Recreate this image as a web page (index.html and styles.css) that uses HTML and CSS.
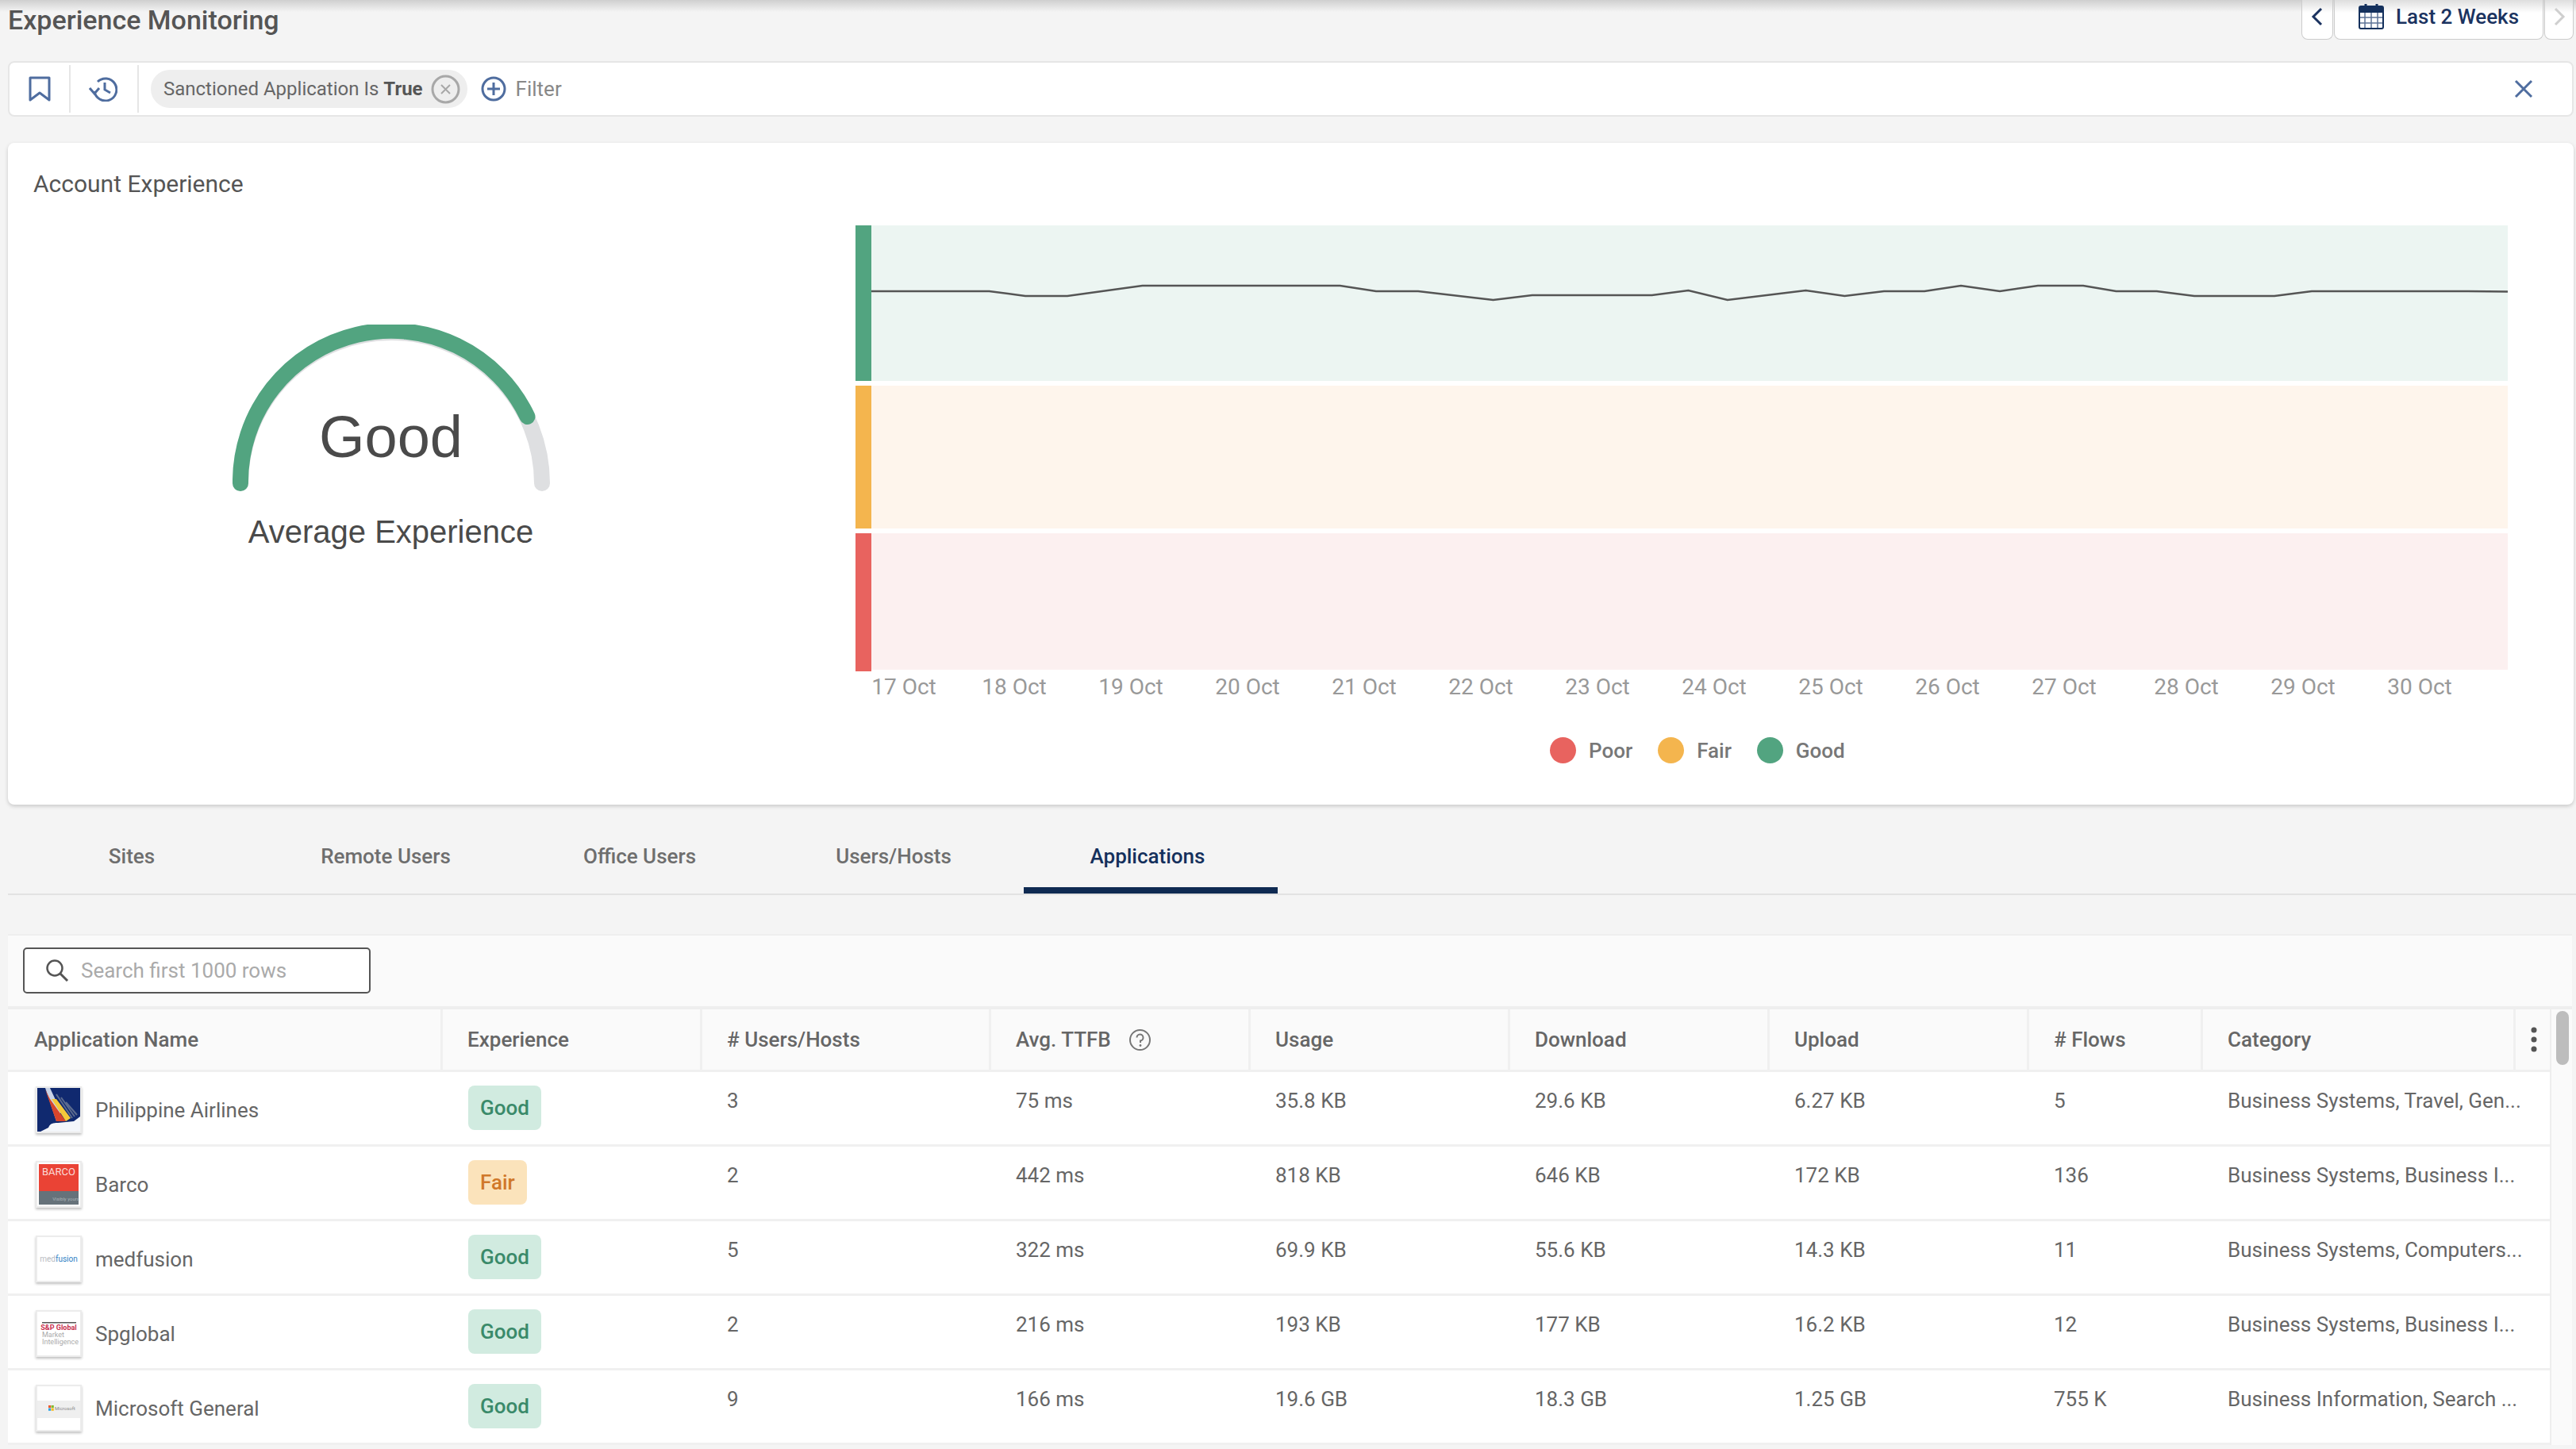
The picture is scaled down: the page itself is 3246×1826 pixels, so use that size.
FILE: index.html
```html
<!DOCTYPE html>
<html>
	<head>
		<title>Experience Monitoring</title>
		<link rel="stylesheet" href="styles.css">
	</head>

	<body>
		<div class="pageHead">
			<div class="pageTitle">Experience Monitoring</div>
			<div class="dateGroup">
				<div class="dateBtn dateArrow">
					<svg width="16" height="26" viewBox="0 0 16 26"><path d="M13 3 L3 13 L13 23" fill="none" stroke="#1b3360" stroke-width="3"/></svg>
				</div>
				<div class="dateBtn dateMain">
					<svg width="32" height="33" viewBox="0 0 32 33">
						<rect x="1" y="4" width="30" height="28" rx="2" fill="#fff" stroke="#14305c" stroke-width="2"/>
						<rect x="1" y="4" width="30" height="8" fill="#14305c"/>
						<path d="M9 1 V8 M23 1 V8" stroke="#14305c" stroke-width="3"/>
						<path d="M8 12 V31 M16 12 V31 M24 12 V31 M2 18 H30 M2 25 H30" stroke="#5d7396" stroke-width="1.5"/>
					</svg>
					<span>Last 2 Weeks</span>
				</div>
				<div class="dateBtn dateArrow dateNext">
					<svg width="16" height="26" viewBox="0 0 16 26"><path d="M3 3 L13 13 L3 23" fill="none" stroke="#cfcfcf" stroke-width="3"/></svg>
				</div>
			</div>
		</div>

		<div class="filterBar">
			<div class="filterTool">
				<svg width="28" height="32" viewBox="0 0 28 32"><path d="M2 2 H26 V30 L14 21 L2 30 Z" fill="none" stroke="#4f6d9f" stroke-width="3" stroke-linejoin="round"/></svg>
			</div>
			<div class="filterTool">
				<svg width="36" height="32" viewBox="0 0 36 32">
					<path d="M7 19 A14 14 0 1 0 11 7" fill="none" stroke="#4f6d9f" stroke-width="3"/>
					<path d="M1 15 L7 22 L13 15" fill="none" stroke="#4f6d9f" stroke-width="3"/>
					<path d="M20 8 V17 L27 21" fill="none" stroke="#4f6d9f" stroke-width="3"/>
				</svg>
			</div>
			<div class="chip">
				<span>Sanctioned Application Is <b>True</b></span>
				<svg width="37" height="37" viewBox="0 0 37 37">
					<circle cx="18.5" cy="18.5" r="16.5" fill="none" stroke="#a8a8a8" stroke-width="3"/>
					<path d="M13 13 L24 24 M24 13 L13 24" stroke="#a8a8a8" stroke-width="2"/>
				</svg>
			</div>
			<svg class="addIcon" width="32" height="32" viewBox="0 0 32 32">
				<circle cx="16" cy="16" r="14" fill="none" stroke="#4f6d9f" stroke-width="3"/>
				<path d="M16 8 V24 M8 16 H24" stroke="#4f6d9f" stroke-width="3"/>
			</svg>
			<span class="filterLabel">Filter</span>
			<svg class="clearIcon" width="24" height="24" viewBox="0 0 24 24"><path d="M2 2 L22 22 M22 2 L2 22" stroke="#4f6d9f" stroke-width="3"/></svg>
		</div>

		<div class="card">
			<div class="cardTitle">Account Experience</div>
			<div class="cardBody">
				<div class="gaugeCol">
					<div class="gauge">
						<svg width="400" height="210" viewBox="0 0 400 210">
							<path d="M10 200 A190 190 0 0 1 390 200" fill="none" stroke="#dedfe1" stroke-width="20" stroke-linecap="round"/>
							<path d="M10 200 A190 190 0 0 1 371.5 116" fill="none" stroke="#52a480" stroke-width="20" stroke-linecap="round"/>
						</svg>
						<div class="gaugeValue">Good</div>
					</div>
					<div class="gaugeLabel">Average Experience</div>
				</div>
				<div class="chartCol">
					<div class="bands">
						<div class="band bandGood"><div class="bandBar"></div><div class="bandFill"></div></div>
						<div class="band bandFair"><div class="bandBar"></div><div class="bandFill"></div></div>
						<div class="band bandPoor"><div class="bandBar"></div><div class="bandFill"></div></div>
						<svg class="bandLine" width="2082" height="562" viewBox="0 0 2082 562">
							<polyline fill="none" stroke="#555" stroke-width="2.5" points="20,83 168.5,83 214,89 267,89 361.5,76 610.6,76 656,83 709,83 803.6,94 852.7,88 1003.6,88 1049.5,82 1098.8,94 1197.4,82 1246.4,89 1296,83 1347,83 1393,76 1442,83 1490,76 1547,76 1588.5,83 1639.7,83 1687,89 1788,89 1835,83 2032,83 2082,83.5"/>
						</svg>
					</div>
					<div class="axis">
						<span class="tick">17 Oct</span>
						<span class="tick tickNear">18 Oct</span>
						<span class="tick">19 Oct</span>
						<span class="tick">20 Oct</span>
						<span class="tick">21 Oct</span>
						<span class="tick">22 Oct</span>
						<span class="tick">23 Oct</span>
						<span class="tick">24 Oct</span>
						<span class="tick">25 Oct</span>
						<span class="tick">26 Oct</span>
						<span class="tick">27 Oct</span>
						<span class="tick tickFar">28 Oct</span>
						<span class="tick">29 Oct</span>
						<span class="tick">30 Oct</span>
					</div>
					<div class="legend">
						<div class="legendItem"><i class="dot dotPoor"></i>Poor</div>
						<div class="legendItem"><i class="dot dotFair"></i>Fair</div>
						<div class="legendItem"><i class="dot dotGood"></i>Good</div>
					</div>
				</div>
			</div>
		</div>

		<div class="tabs">
			<div class="tab">Sites</div>
			<div class="tab">Remote Users</div>
			<div class="tab">Office Users</div>
			<div class="tab">Users/Hosts</div>
			<div class="tab tabActive">Applications</div>
		</div>

		<div class="panel">
			<div class="panelTools">
				<div class="search">
					<svg width="30" height="30" viewBox="0 0 30 30">
						<circle cx="12" cy="12" r="9.5" fill="none" stroke="#555" stroke-width="2.5"/>
						<path d="M19 19 L28 28" stroke="#555" stroke-width="3"/>
					</svg>
					<span>Search first 1000 rows</span>
				</div>
			</div>
			<div class="tableWrap">
				<div class="table">
					<div class="row rowHead">
						<div class="cell">Application Name</div>
						<div class="cell">Experience</div>
						<div class="cell"># Users/Hosts</div>
						<div class="cell">Avg. TTFB
							<svg class="helpIcon" width="29" height="29" viewBox="0 0 29 29">
								<circle cx="14.5" cy="14.5" r="12.5" fill="none" stroke="#777" stroke-width="2"/>
								<path d="M10.5 11.5 A4 4 0 1 1 15 15.5 V18" fill="none" stroke="#777" stroke-width="2"/>
								<circle cx="15" cy="21.5" r="1.4" fill="#777"/>
							</svg>
						</div>
						<div class="cell">Usage</div>
						<div class="cell">Download</div>
						<div class="cell">Upload</div>
						<div class="cell"># Flows</div>
						<div class="cell">Category</div>
						<div class="cell cellMenu">
							<svg width="8" height="32" viewBox="0 0 8 32"><circle cx="4" cy="4" r="3.5" fill="#555"/><circle cx="4" cy="16" r="3.5" fill="#555"/><circle cx="4" cy="28" r="3.5" fill="#555"/></svg>
						</div>
					</div>

					<div class="row">
						<div class="cell cellName">
							<div class="logo">
								<svg width="54" height="55" viewBox="0 0 54 55">
									<rect width="54" height="55" fill="#10296f"/>
									<polygon points="10,0 16,0 30,30 24,42" fill="#c9d3e6"/>
									<polygon points="10,2 24,42 36,42 16,14" fill="#d8452b"/>
									<polygon points="18,14 36,42 42,38 24,14" fill="#f4c93a"/>
									<path d="M24 8 L44 38 M30 12 L47 36 M36 18 L50 34" stroke="#5c6b8e" stroke-width="2"/>
									<path d="M14 50 Q16 43 26 44 L46 42 L54 36 V55 H4 Z" fill="#f4f6fa"/>
								</svg>
							</div>
							<span>Philippine Airlines</span>
						</div>
						<div class="cell"><span class="badge badgeGood">Good</span></div>
						<div class="cell">3</div>
						<div class="cell">75 ms</div>
						<div class="cell">35.8 KB</div>
						<div class="cell">29.6 KB</div>
						<div class="cell">6.27 KB</div>
						<div class="cell">5</div>
						<div class="cell cellWide">Business Systems, Travel, Gen...</div>
					</div>

					<div class="row">
						<div class="cell cellName">
							<div class="logo">
								<svg width="54" height="55" viewBox="0 0 54 55">
									<rect x="2" y="2" width="50" height="34" fill="#ea4335"/>
									<rect x="2" y="36" width="50" height="17" fill="#66727a"/>
									<text x="27" y="16" class="logoText" font-size="13" fill="#fbdcd8">BARCO</text>
									<text x="36" y="48" class="logoText" font-size="6" fill="#aab2b7">Visibly yours</text>
								</svg>
							</div>
							<span>Barco</span>
						</div>
						<div class="cell"><span class="badge badgeFair">Fair</span></div>
						<div class="cell">2</div>
						<div class="cell">442 ms</div>
						<div class="cell">818 KB</div>
						<div class="cell">646 KB</div>
						<div class="cell">172 KB</div>
						<div class="cell">136</div>
						<div class="cell cellWide">Business Systems, Business I...</div>
					</div>

					<div class="row">
						<div class="cell cellName">
							<div class="logo">
								<svg width="54" height="55" viewBox="0 0 54 55">
									<text x="27" y="31" class="logoText" font-size="10"><tspan fill="#b9bcc2">med</tspan><tspan fill="#2f7fc4">fusion</tspan></text>
								</svg>
							</div>
							<span>medfusion</span>
						</div>
						<div class="cell"><span class="badge badgeGood">Good</span></div>
						<div class="cell">5</div>
						<div class="cell">322 ms</div>
						<div class="cell">69.9 KB</div>
						<div class="cell">55.6 KB</div>
						<div class="cell">14.3 KB</div>
						<div class="cell">11</div>
						<div class="cell cellWide">Business Systems, Computers...</div>
					</div>

					<div class="row">
						<div class="cell cellName">
							<div class="logo">
								<svg width="54" height="55" viewBox="0 0 54 55">
									<rect x="6" y="13" width="43" height="1.5" fill="#555"/>
									<text x="27" y="23" class="logoText" font-size="9" font-weight="700" fill="#c8314f">S&amp;P Global</text>
									<text x="6" y="32" class="logoLeft" font-size="9" fill="#aaa">Market</text>
									<text x="6" y="41" class="logoLeft" font-size="9" fill="#aaa">Intelligence</text>
								</svg>
							</div>
							<span>Spglobal</span>
						</div>
						<div class="cell"><span class="badge badgeGood">Good</span></div>
						<div class="cell">2</div>
						<div class="cell">216 ms</div>
						<div class="cell">193 KB</div>
						<div class="cell">177 KB</div>
						<div class="cell">16.2 KB</div>
						<div class="cell">12</div>
						<div class="cell cellWide">Business Systems, Business I...</div>
					</div>

					<div class="row">
						<div class="cell cellName">
							<div class="logo">
								<svg width="54" height="55" viewBox="0 0 54 55">
									<rect y="18" width="54" height="22" fill="#efefef"/>
									<rect x="14" y="24" width="3.2" height="3.2" fill="#ee5a2b"/>
									<rect x="17.6" y="24" width="3.2" height="3.2" fill="#80bb2d"/>
									<rect x="14" y="27.6" width="3.2" height="3.2" fill="#2ba4e6"/>
									<rect x="17.6" y="27.6" width="3.2" height="3.2" fill="#fbbb1f"/>
									<text x="22" y="30" class="logoLeft" font-size="6" fill="#8a8a8a">Microsoft</text>
								</svg>
							</div>
							<span>Microsoft General</span>
						</div>
						<div class="cell"><span class="badge badgeGood">Good</span></div>
						<div class="cell">9</div>
						<div class="cell">166 ms</div>
						<div class="cell">19.6 GB</div>
						<div class="cell">18.3 GB</div>
						<div class="cell">1.25 GB</div>
						<div class="cell">755 K</div>
						<div class="cell cellWide">Business Information, Search ...</div>
					</div>
				</div>
				<div class="scrollTrack"><div class="scrollThumb"></div></div>
			</div>
		</div>
	</body>
</html>
```

FILE: styles.css
```css
html
{
	height: 100%;
	overflow: hidden;
}

body
{
	margin: 0;
	height: 1826px;
	overflow: hidden;
	font-family: Roboto, sans-serif;
	font-size: 26px;
	color: #666;
	background: linear-gradient(#cfcfcf, #f4f4f4 15px) no-repeat #f4f4f4;
}

.pageHead
{
	display: flex;
	justify-content: space-between;
	height: 50px;
	padding: 0 3px 0 10px;
}

.pageTitle
{
	font-size: 34px;
	font-weight: 500;
	line-height: 50px;
	color: #555;
}

.dateGroup
{
	display: flex;
	gap: 1px;
}

.dateBtn
{
	display: flex;
	align-items: center;
	justify-content: center;
	box-sizing: border-box;
	height: 50px;
	padding-bottom: 8px;
	border: 1px solid #ccc;
	border-top: 0;
	border-radius: 0 0 8px 8px;
	background: linear-gradient(#dedede, #fff 16px);
}

.dateArrow
{
	width: 40px;
}

.dateNext
{
	width: 37px;
}

.dateMain
{
	width: 264px;
	gap: 15px;
	font-weight: 500;
	color: #1b3360;
}

.filterBar
{
	display: flex;
	align-items: center;
	height: 66px;
	margin: 27px 3px 0 10px;
	border: 2px solid #e6e6e6;
	border-radius: 8px;
	background: #fff;
}

.filterTool
{
	display: flex;
	align-items: center;
	justify-content: center;
	width: 75px;
	height: 60px;
	border-right: 2px solid #e6e6e6;
}

.filterTool + .filterTool
{
	box-sizing: border-box;
	width: 86px;
	padding-right: 3px;
}

.chip
{
	display: flex;
	align-items: center;
	gap: 10px;
	height: 48px;
	margin-left: 15px;
	padding: 0 9px 0 16px;
	border-radius: 24px;
	font-size: 24px;
	background: #eeeeee;
}

.chip b
{
	font-weight: 700;
	color: #555;
}

.addIcon
{
	margin-left: 17px;
}

.filterLabel
{
	margin-left: 12px;
	color: #888;
}

.clearIcon
{
	margin-left: auto;
	margin-right: 49px;
}

.card
{
	height: 834px;
	margin: 33px 3px 0 10px;
	border-radius: 8px;
	background: #fff;
	box-shadow: 0 2px 5px rgba(0, 0, 0, 0.18);
}

.cardTitle
{
	height: 104px;
	padding-left: 32px;
	font-size: 30px;
	line-height: 104px;
	color: #555;
}

.cardBody
{
	display: flex;
}

.gaugeCol
{
	width: 965px;
	margin-right: 103px;
	padding-top: 125px;
	text-align: center;
	font-family: "Liberation Sans", sans-serif;
	color: #4a4a4a;
}

.gauge
{
	position: relative;
	width: 400px;
	height: 210px;
	margin: 0 auto;
}

.gaugeValue
{
	position: absolute;
	left: 0;
	right: 0;
	top: 97px;
	font-size: 74px;
	line-height: 90px;
}

.gaugeLabel
{
	margin-top: 28px;
	font-size: 40px;
	line-height: 46px;
}

.chartCol
{
	width: 2082px;
}

.bands
{
	position: relative;
	display: flex;
	flex-direction: column;
	gap: 6px;
}

.band
{
	display: flex;
}

.bandBar
{
	width: 20px;
}

.bandFill
{
	flex: 1;
}

.bandGood
{
	height: 196px;
}

.bandFair
{
	height: 180px;
}

.bandPoor
{
	height: 174px;
}

.bandGood .bandBar
{
	background: #52a480;
}

.bandGood .bandFill
{
	background: #ecf5f2;
}

.bandFair .bandBar
{
	background: #f4b54e;
}

.bandFair .bandFill
{
	background: #fef5ec;
}

.bandPoor .bandBar
{
	background: #e8635f;
}

.bandPoor .bandFill
{
	height: 172px;
	background: #fcf0f0;
}

.bandLine
{
	position: absolute;
	left: 0;
	top: 0;
}

.axis
{
	display: flex;
	gap: 65px;
	margin-top: 4px;
	padding-left: 20px;
	font-size: 28px;
	line-height: 32px;
	color: #999;
}

.tick
{
	flex: none;
	width: 82px;
	text-align: center;
}

.tickNear
{
	margin-left: -8px;
}

.tickFar
{
	margin-left: 7px;
}

.legend
{
	display: flex;
	gap: 32px;
	margin-top: 47px;
	padding-left: 875px;
}

.legendItem
{
	display: flex;
	align-items: center;
	gap: 16px;
	font-weight: 500;
	line-height: 32px;
	color: #777;
}

.dot
{
	width: 33px;
	height: 33px;
	border-radius: 50%;
}

.dotPoor
{
	background: #e8635f;
}

.dotFair
{
	background: #f4b54e;
}

.dotGood
{
	background: #52a480;
}

.tabs
{
	display: flex;
	height: 112px;
	margin: 0 0 0 10px;
	border-bottom: 2px solid #e2e2e2;
}

.tab
{
	position: relative;
	width: 320px;
	line-height: 130px;
	text-align: center;
	font-weight: 500;
	color: #6e6e6e;
}

.tab:first-child
{
	margin-left: -4px;
}

.tabActive
{
	color: #14305c;
}

.tabActive::after
{
	content: "";
	position: absolute;
	left: 4px;
	right: -4px;
	bottom: 0;
	height: 8px;
	background: #0f2a52;
}

.panel
{
	margin: 49px 5px 0 10px;
	border-top: 2px solid #eeeeee;
	background: #fafafa;
}

.panelTools
{
	height: 58px;
	padding: 15px 19px 16px;
	border-bottom: 4px solid #eeeeee;
}

.search
{
	display: flex;
	align-items: center;
	gap: 15px;
	box-sizing: border-box;
	width: 438px;
	height: 58px;
	padding-left: 26px;
	border: 2px solid #555;
	border-radius: 5px;
	color: #aaa;
	background: #fff;
}

.tableWrap
{
	display: flex;
}

.table
{
	width: 3203px;
}

.row
{
	display: grid;
	grid-template-columns: 548px 327px 364px 327px 327px 327px 327px 219px 394px 43px;
	box-sizing: border-box;
	height: 94px;
	border-bottom: 3px solid #f0f0f0;
	background: #fff;
}

.rowHead
{
	height: 79px;
	font-weight: 500;
	background: #fafafa;
}

.cell
{
	box-sizing: border-box;
	padding: 20px 0 0 31px;
	line-height: 32px;
	white-space: nowrap;
}

.rowHead .cell
{
	display: flex;
	align-items: center;
	padding-top: 0;
	border-right: 3px solid #f0f0f0;
}

.rowHead .cell:first-child
{
	padding-left: 33px;
}

.rowHead .cellMenu
{
	padding-left: 19px;
	border-right: 0;
}

.helpIcon
{
	margin-left: 22px;
}

.cellName
{
	display: flex;
	align-items: center;
	gap: 17px;
	padding: 4px 0 0 35px;
}

.cellWide
{
	grid-column: span 2;
}

.logo
{
	width: 54px;
	height: 55px;
	border: 2px solid #ececec;
	background: #fff;
	box-shadow: 0 2px 3px rgba(0, 0, 0, 0.25);
}

.logo svg
{
	display: block;
}

.logoText
{
	text-anchor: middle;
	font-family: Roboto, sans-serif;
}

.logoLeft
{
	font-family: Roboto, sans-serif;
}

.badge
{
	display: inline-block;
	margin: -3px 0 0 1px;
	padding: 12px 15px;
	border-radius: 8px;
	font-weight: 500;
}

.badgeGood
{
	color: #3a8a6a;
	background: #d1ebe0;
}

.badgeFair
{
	color: #d0782a;
	background: #fbe3bb;
}

.scrollTrack
{
	flex: 1;
	border-left: 2px solid #eeeeee;
	background: #fafafa;
}

.scrollThumb
{
	width: 16px;
	height: 68px;
	margin: 2px 0 0 6px;
	border-radius: 8px;
	background: #bdbdbd;
}
```
